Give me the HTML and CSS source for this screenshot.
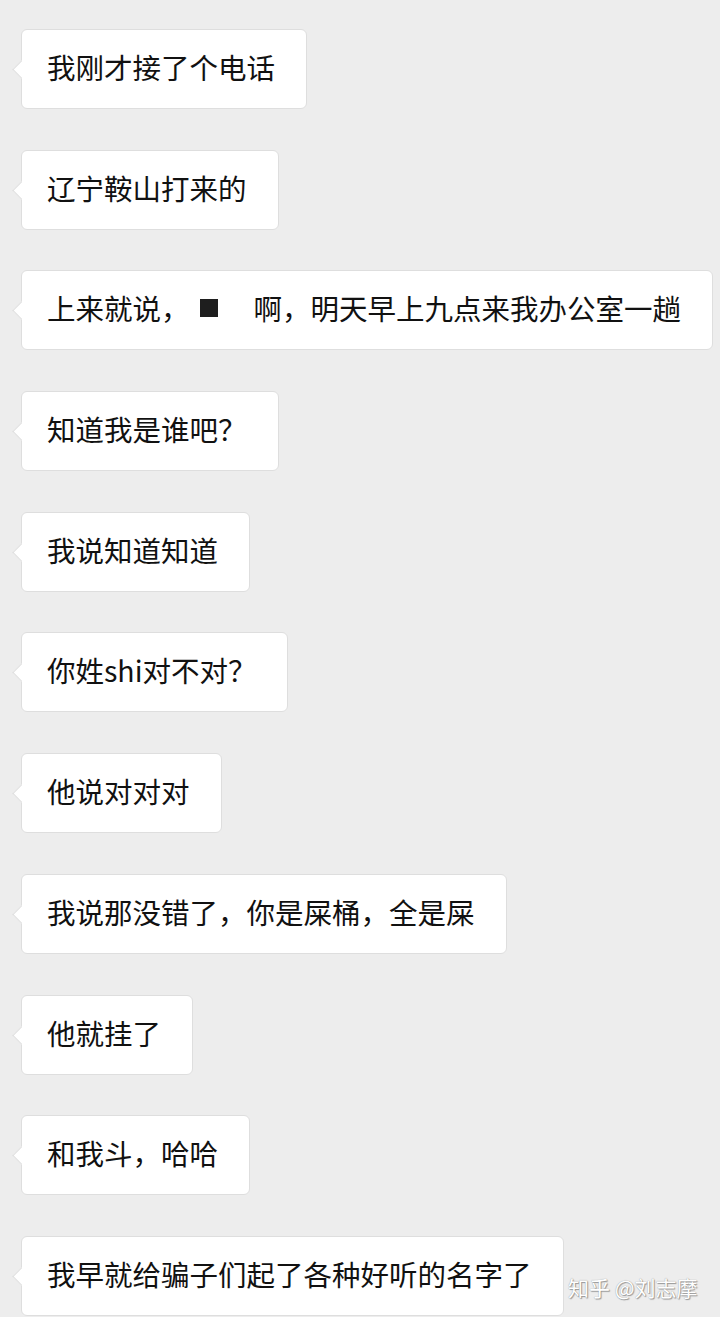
FILE: index.html
```html
<!DOCTYPE html>
<html lang="zh-CN">
<head>
  <meta charset="UTF-8">
  <meta name="viewport" content="width=device-width, initial-scale=1.0">
  <title>聊天记录</title>
  <link rel="stylesheet" href="styles.css">
</head>
<body>
  <div class="chat">
    <div class="bubble">我刚才接了个电话</div>
    <div class="bubble">辽宁鞍山打来的</div>
    <div class="bubble">上来就说，<span class="mask"></span><span class="blank"></span>啊，明天早上九点来我办公室一趟</div>
    <div class="bubble">知道我是谁吧？</div>
    <div class="bubble">我说知道知道</div>
    <div class="bubble">你姓shi对不对？</div>
    <div class="bubble">他说对对对</div>
    <div class="bubble">我说那没错了，你是屎桶，全是屎</div>
    <div class="bubble">他就挂了</div>
    <div class="bubble">和我斗，哈哈</div>
    <div class="bubble">我早就给骗子们起了各种好听的名字了</div>
  </div>
  <div class="watermark">知乎 @刘志摩</div>
</body>
</html>
```

FILE: styles.css
```css
body {
  margin: 0;
  background-color: #ededed;
  font-family: "Noto Sans CJK SC", "Noto Sans", sans-serif;
  color: #111;
  height: 1317px;
  overflow: hidden;
  position: relative;
}
.chat {
  display: flex;
  flex-direction: column;
  align-items: flex-start;
  gap: 40.7px;
  padding: 29px 0 0 21px;
}
.bubble {
  position: relative;
  box-sizing: border-box;
  height: 80px;
  display: flex;
  align-items: center;
  padding: 0 31px 5px 25px;
  background-color: #fff;
  border: 1px solid #dedede;
  border-radius: 6px;
  font-size: 28.5px;
  white-space: nowrap;
}
.bubble::before {
  content: "";
  position: absolute;
  left: -7px;
  top: 50%;
  width: 12px;
  height: 12px;
  margin-top: -6px;
  background-color: #fff;
  border-left: 1px solid #dedede;
  border-bottom: 1px solid #dedede;
  transform: rotate(45deg);
}
.mask {
  display: inline-block;
  width: 18px;
  height: 18px;
  background-color: #1e1e1e;
  margin: 0 0 0 10px;
}
.blank {
  display: inline-block;
  width: 36px;
}
.watermark {
  position: absolute;
  left: 568px;
  top: 1272px;
  font-size: 21px;
  color: #fff;
  text-shadow: 0 0 1px #888, 1px 1px 1px #999;
  white-space: nowrap;
}
```
